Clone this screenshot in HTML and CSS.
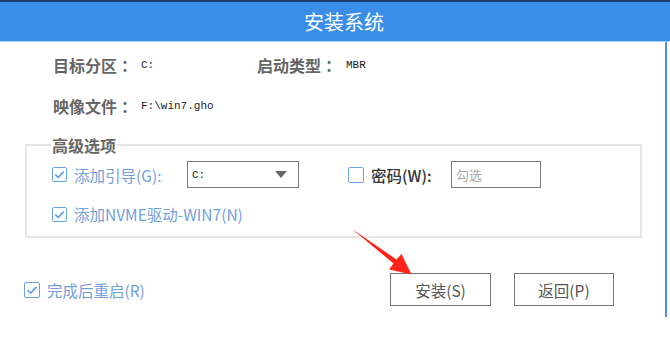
FILE: index.html
```html
<!DOCTYPE html>
<html lang="zh-CN">
<head>
<meta charset="utf-8">
<title>安装系统</title>
<link rel="stylesheet" href="styles.css">
</head>
<body>
<div class="dialog">
  <header class="titlebar"><span class="title">安装系统</span></header>
  <div class="content">
    <div class="info">
      <span class="label">目标分区<span class="colon" lang="zh-TW">：</span></span><span class="val">C:</span>
      <span class="label">启动类型<span class="colon" lang="zh-TW">：</span></span><span class="val">MBR</span>
      <span class="label">映像文件<span class="colon" lang="zh-TW">：</span></span><span class="val wide">F:\win7.gho</span>
    </div>

    <fieldset class="adv">
      <legend>高级选项</legend>
      <div class="adv-row first">
        <label class="check blue">
          <span class="box"><svg viewBox="0 0 15 15" width="15" height="15"><path d="M3.3 7.6 L6.3 10.4 L11.7 4.6" fill="none" stroke="#5b9ee6" stroke-width="1.6"/></svg></span>
          添加引导(G):
        </label>
        <div class="select"><span class="mono">C:</span><span class="tri"></span></div>
        <label class="check dark">
          <span class="box"></span>
          密码(W):
        </label>
        <div class="input">勾选</div>
      </div>
      <div class="adv-row">
        <label class="check blue">
          <span class="box"><svg viewBox="0 0 15 15" width="15" height="15"><path d="M3.3 7.6 L6.3 10.4 L11.7 4.6" fill="none" stroke="#5b9ee6" stroke-width="1.6"/></svg></span>
          添加NVME驱动-WIN7(N)
        </label>
      </div>
    </fieldset>

    <div class="footer">
      <label class="check blue restart">
        <span class="box big"><svg viewBox="0 0 16 16" width="16" height="16"><path d="M3.5 8 L6.7 11 L12.5 4.8" fill="none" stroke="#5b9ee6" stroke-width="1.7"/></svg></span>
        完成后重启(R)
      </label>
      <button class="btn install">安装(S)</button>
      <button class="btn back">返回(P)</button>
    </div>
  </div>

  <svg class="arrow" width="670" height="354" viewBox="0 0 670 354">
    <polygon points="352,229 396.5,259.5 401.5,254 411.5,274.5 389,269.5 393.5,263.5" fill="#ff2419"/>
  </svg>
</div>
</body>
</html>
```
FILE: styles.css
```css
html, body {
  margin: 0;
  padding: 0;
  background: #ffffff;
}
body {
  width: 670px;
  height: 354px;
  overflow: hidden;
  font-family: "Noto Sans CJK SC", "Noto Sans", sans-serif;
}
.dialog {
  position: relative;
  width: 667px;
  height: 317px;
  box-sizing: border-box;
  border-right: 2px solid #4a91e2;
}
.titlebar {
  width: 670px;
  height: 42px;
  box-sizing: border-box;
  background: #3a8ee8;
  border-top: 2px solid #1d3d6e;
  border-bottom: 1px solid #a9d0f7;
  display: flex;
  align-items: center;
  justify-content: center;
  padding-left: 18px;
}
.title {
  color: #ffffff;
  font-size: 20px;
  line-height: 24px;
}
.content {
  padding-top: 12px;
}
.info {
  display: grid;
  grid-template-columns: 88px 116px 89px auto;
  row-gap: 19px;
  padding-left: 53px;
  line-height: 22px;
  align-items: center;
}
.label {
  font-size: 16px;
  font-weight: bold;
  color: #666666;
  white-space: nowrap;
}
.colon {
  font-family: "Noto Sans CJK TC", "Noto Sans CJK SC", sans-serif;
}
.val {
  font-family: "Liberation Mono", "DejaVu Sans Mono", monospace;
  font-size: 11px;
  color: #222222;
}
.wide {
  grid-column: 2 / 5;
}
.adv {
  box-sizing: border-box;
  width: 617px;
  margin: 17px 0 0 25px;
  padding: 5px 0 12px 24px;
  border: 2px solid #e6e6e6;
}
.adv legend {
  padding: 0 1px;
  font-size: 16px;
  font-weight: bold;
  line-height: 22px;
  color: #666666;
}
.adv-row {
  display: grid;
  grid-template-columns: 136px 161px 103px auto;
  align-items: center;
  height: 20px;
  margin-top: 16px;
}
.adv-row.first {
  height: 27px;
  margin-top: 0;
}
.check {
  display: flex;
  align-items: center;
  font-size: 15.5px;
  line-height: 20px;
  white-space: nowrap;
}
.check.blue {
  color: #74a0d8;
}
.check.dark {
  color: #333333;
  font-weight: 500;
}
.box {
  width: 15px;
  height: 15px;
  box-sizing: border-box;
  border: 1.5px solid #68a4e8;
  border-radius: 2px;
  margin-left: 1px;
  margin-right: 7px;
  display: flex;
  align-items: center;
  justify-content: center;
  flex: none;
  background: #ffffff;
}
.check.dark .box {
  width: 16px;
  height: 16px;
  margin-left: 0;
  border: 1.5px solid #6aa6ea;
}
.box svg {
  display: block;
  flex: none;
}
.box.big {
  width: 16px;
  height: 16px;
  margin-left: 0;
  margin-right: 7px;
}
.select {
  width: 112px;
  height: 27px;
  box-sizing: border-box;
  border: 1px solid #7a7a7a;
  display: flex;
  align-items: center;
  justify-content: space-between;
  padding: 0 11px 0 4px;
}
.mono {
  font-family: "Liberation Mono", "DejaVu Sans Mono", monospace;
  font-size: 11px;
  color: #222222;
}
.tri {
  width: 0;
  height: 0;
  border-left: 6.5px solid transparent;
  border-right: 6.5px solid transparent;
  border-top: 7px solid #666666;
}
.input {
  width: 90px;
  height: 27px;
  box-sizing: border-box;
  border: 1px solid #7a7a7a;
  font-size: 13px;
  line-height: 25px;
  color: #aaaaaa;
  padding-left: 4px;
}
.footer {
  display: grid;
  grid-template-columns: 366px 124px 100px;
  align-items: center;
  margin-top: 35px;
  padding-left: 24px;
}
.btn {
  height: 33px;
  box-sizing: border-box;
  border: 1px solid #777777;
  background: #ffffff;
  color: #555555;
  font-family: "Noto Sans CJK SC", "Noto Sans", sans-serif;
  font-size: 15.5px;
  padding: 0;
}
.install {
  width: 101px;
}
.back {
  width: 100px;
}
.arrow {
  position: absolute;
  left: 0;
  top: 0;
  pointer-events: none;
}
```
